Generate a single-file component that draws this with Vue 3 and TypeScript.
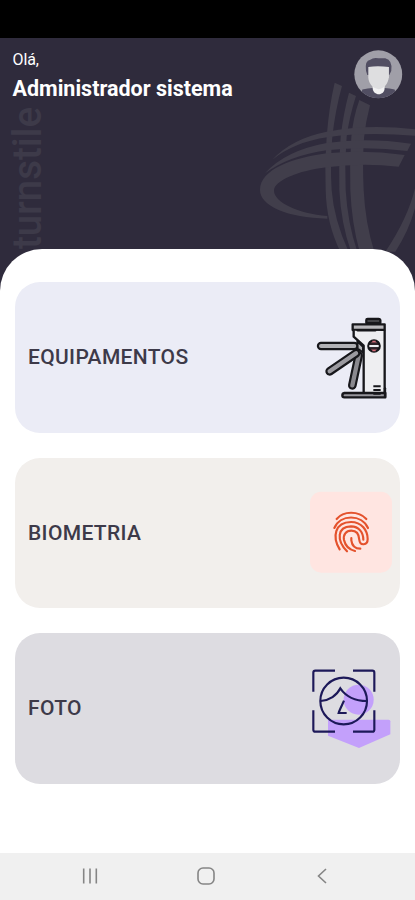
<script setup lang="ts">
interface MenuItem {
  id: 'equipment' | 'biometrics' | 'photo'
  label: string
}

const items: MenuItem[] = [
  { id: 'equipment', label: 'EQUIPAMENTOS' },
  { id: 'biometrics', label: 'BIOMETRIA' },
  { id: 'photo', label: 'FOTO' },
]
</script>

<template>
  <div class="screen">
    <div class="status-bar"></div>
    <header class="header">
      <svg class="backdrop" viewBox="0 38 415 262" aria-hidden="true">
        <text class="brand" transform="translate(41 249) rotate(-90)" textLength="142" lengthAdjust="spacingAndGlyphs">turnstile</text>
        <g transform="translate(250 70) scale(.33333)" class="emblem">
          <path d="M254 38L276 48Q256 120 247 200Q240 280 245 360Q252 450 296 545H271Q229 460 227 360Q223 280 230 200Q237 110 254 38Z" />
          <path d="M297 68L318 78Q298 140 290 200Q283 280 287 360Q293 460 322 545H303Q273 460 268 360Q265 280 272 200Q280 130 297 68Z" />
          <path d="M328 90L360 106Q347 155 342 205Q337 280 341 360Q346 460 373 545H329Q305 460 301 360Q298 280 304 200Q310 140 328 90Z" />
          <path d="M67 269Q125 206 230 185Q350 161 500 178V198Q350 185 232 202Q134 216 67 269Z" />
          <path d="M45 310Q105 242 230 219Q350 202 483 221L472 243Q350 228 230 241Q118 257 45 310Z" />
          <path d="M464 255L446 290Q335 278 230 292C145 302 72 332 72 362C72 396 145 431 232 438V446C112 443 30 408 30 360C30 298 130 263 230 250Q345 238 464 255Z" />
          <path d="M500 330Q483 430 406 545H436Q482 475 500 395Z" />
        </g>
      </svg>
      <div class="greeting">
        <span class="hello">Olá,</span>
        <strong class="name">Administrador sistema</strong>
      </div>
      <svg class="avatar" viewBox="0 0 146 146" aria-hidden="true">
        <defs><clipPath id="avatar-clip"><circle cx="73" cy="73" r="72" /></clipPath></defs>
        <g clip-path="url(#avatar-clip)">
          <rect width="146" height="146" fill="#a09fa8" />
          <path d="M18 146L25 119Q42 114 56 114H91Q107 114 122 119L130 146Z" fill="#514e62" />
          <path d="M56 98H92V114C92 139 57 139 56 114Z" fill="#f1f1f2" />
          <path d="M36 62Q32 31 49 29Q58 22 74 25H94Q117 31 112 63L106 75H40Z" fill="#514e62" />
          <path d="M43 51Q70 46 105 51V82C101 104 91 115 74 118C54 114 44 100 43 82Z" fill="#dedee0" />
        </g>
      </svg>
    </header>

    <main class="sheet">
      <button v-for="item in items" :key="item.id" type="button" class="card" :class="item.id">
        <span class="label">{{ item.label }}</span>

        <svg v-if="item.id === 'equipment'" class="art" viewBox="-15 -70 300 453" aria-hidden="true">
          <g stroke="#17171b" stroke-width="7" stroke-linecap="round" stroke-linejoin="round">
            <path d="M184 53V44Q184 41 188 41H221Q225 41 226 44V53Z" fill="#555459" />
            <path d="M143 57H239V74H143Z" fill="#bab9bd" />
            <path d="M146 76V94L176 121V266H239V77" fill="#eeeef1" />
            <path d="M158 75H211" fill="none" />
            <path d="M118 263H241V276H118Q112 276 112 270T118 263Z" fill="#97969c" />
            <path d="M240 249V275" fill="none" />
            <circle cx="207" cy="122" r="17" fill="#77434c" />
          </g>
          <g fill="none" stroke-linecap="round">
            <path d="M142 240L161 151" stroke="#17171b" stroke-width="26" />
            <path d="M142 240L161 151" stroke="#8a898f" stroke-width="13" />
            <path d="M74 198L153 144" stroke="#17171b" stroke-width="26" />
            <path d="M74 198L153 144" stroke="#9b9aa0" stroke-width="13" />
            <path d="M48 122H148" stroke="#17171b" stroke-width="25" />
            <path d="M48 122H148" stroke="#b2b2b6" stroke-width="12" />
          </g>
          <path d="M157 108L174 124V142L158 130Z" fill="#b2b2b6" stroke="#17171b" stroke-width="6" stroke-linejoin="round" />
          <path d="M193 119H221V126H193Z" fill="#eeeef1" />
          <path d="M190 116H224M190 128H224" stroke="#17171b" stroke-width="4" />
          <path d="M202 108H212M202 136H212" stroke="#d76c78" stroke-width="4" />
          <path d="M205 243H227M205 254H227M205 265H227" stroke="#17171b" stroke-width="6" />
        </svg>

        <svg v-else-if="item.id === 'biometrics'" class="art" viewBox="0 -68 300 453" aria-hidden="true">
          <rect x="30" y="36" width="246" height="243" rx="34" fill="#ffe5e1" />
          <g fill="none" stroke="#e4522d" stroke-width="6.5" stroke-linecap="round">
            <path d="M110 118C130 93 176 93 199 118" />
            <path d="M103 145C121 103 185 103 204 145" />
            <path d="M119 209C96 171 104 128 153 127C185 127 203 152 203 178C203 198 180 199 178 181C177 162 167 153 154 153C138 153 129 165 132 181C136 199 148 210 165 214" />
            <path d="M141 215C109 183 111 141 153 140C177 140 190 159 190 180" />
            <path d="M154 175V182C156 198 166 207 181 207" />
          </g>
        </svg>

        <svg v-else class="art" viewBox="0 -66 300 453" aria-hidden="true">
          <circle cx="176" cy="134" r="45" fill="#c3a0fb" />
          <path d="M84 194H266Q271 194 271 199V238L177 279L84 242Z" fill="#c3a0fb" />
          <g fill="none" stroke="#1d1959" stroke-width="6.5">
            <path d="M40 110V53Q40 47 46 47H105M159 47H217Q223 47 223 53V110M223 166V224Q223 230 217 230H159M105 230H46Q40 230 40 224V166" />
            <circle cx="131" cy="138" r="70" />
            <path d="M62 138C88 136 111 121 121 100C137 124 167 138 200 138M132 137C126 151 119 163 116 174H140" />
          </g>
        </svg>
      </button>
    </main>

    <nav class="nav-bar">
      <button type="button" class="nav-button" aria-label="Recentes">
        <svg viewBox="0 0 20 20"><path d="M3.7 2.5V17.5M10 2.5V17.5M16.3 2.5V17.5" /></svg>
      </button>
      <button type="button" class="nav-button" aria-label="Início">
        <svg viewBox="0 0 20 20"><rect x="2" y="2" width="16" height="16" rx="5" /></svg>
      </button>
      <button type="button" class="nav-button" aria-label="Voltar">
        <svg viewBox="0 0 20 20"><path d="M14 3L6.5 10L14 17" /></svg>
      </button>
    </nav>
  </div>
</template>

<style>
body {
  margin: 0;
}
</style>

<style scoped>
.screen {
  display: flex;
  flex-direction: column;
  width: 100%;
  height: 900px;
  overflow: hidden;
  background: #2f2b3c;
  font-family: Roboto, sans-serif;
}

.status-bar {
  flex: 0 0 38px;
  background: #000;
}

.header {
  position: relative;
  display: flex;
  justify-content: space-between;
  align-items: flex-start;
  flex: 0 0 211px;
  box-sizing: border-box;
  padding: 12px 12.5px 0;
  color: #fff;
}

.backdrop {
  position: absolute;
  top: 0;
  left: 0;
  width: 415px;
  height: 262px;
}

.brand {
  fill: #3d3a49;
  font-size: 40px;
  font-weight: 500;
}

.emblem {
  fill: #413e4b;
}

.greeting {
  position: relative;
  display: flex;
  flex-direction: column;
}

.hello {
  font-size: 16px;
  line-height: 20px;
  letter-spacing: -0.1px;
}

.name {
  margin-top: 6px;
  font-size: 21.5px;
  font-weight: 700;
  line-height: 26px;
}

.avatar {
  position: relative;
  width: 48.6px;
  height: 48.6px;
}

.sheet {
  position: relative;
  display: flex;
  flex: 1;
  flex-direction: column;
  gap: 25px;
  box-sizing: border-box;
  padding: 33px 15px 0;
  border-radius: 42px 42px 0 0;
  background: #fff;
}

.card {
  display: flex;
  flex: 0 0 150.6px;
  justify-content: space-between;
  align-items: center;
  padding: 0 0 0 13px;
  border: 0;
  border-radius: 25px;
  color: #3d3a49;
  font-family: inherit;
  overflow: hidden;
}

.equipment {
  background: #ebecf6;
}

.biometrics {
  background: #f2efec;
}

.photo {
  background: #dddce1;
}

.label {
  font-size: 21px;
  font-weight: 500;
  line-height: 28px;
  letter-spacing: 0.35px;
}

.art {
  width: 100px;
  height: 151px;
}

.nav-bar {
  display: flex;
  flex: 0 0 47px;
  justify-content: center;
  gap: 96px;
  box-sizing: border-box;
  padding: 0 3px 2px 0;
  background: #f0f0f0;
}

.nav-button {
  display: flex;
  align-items: center;
  justify-content: center;
  width: 20px;
  padding: 0;
  border: 0;
  background: none;
}

.nav-button svg {
  flex: none;
  width: 20px;
  height: 20px;
  fill: none;
  stroke: #858585;
  stroke-width: 1.6;
}
</style>
